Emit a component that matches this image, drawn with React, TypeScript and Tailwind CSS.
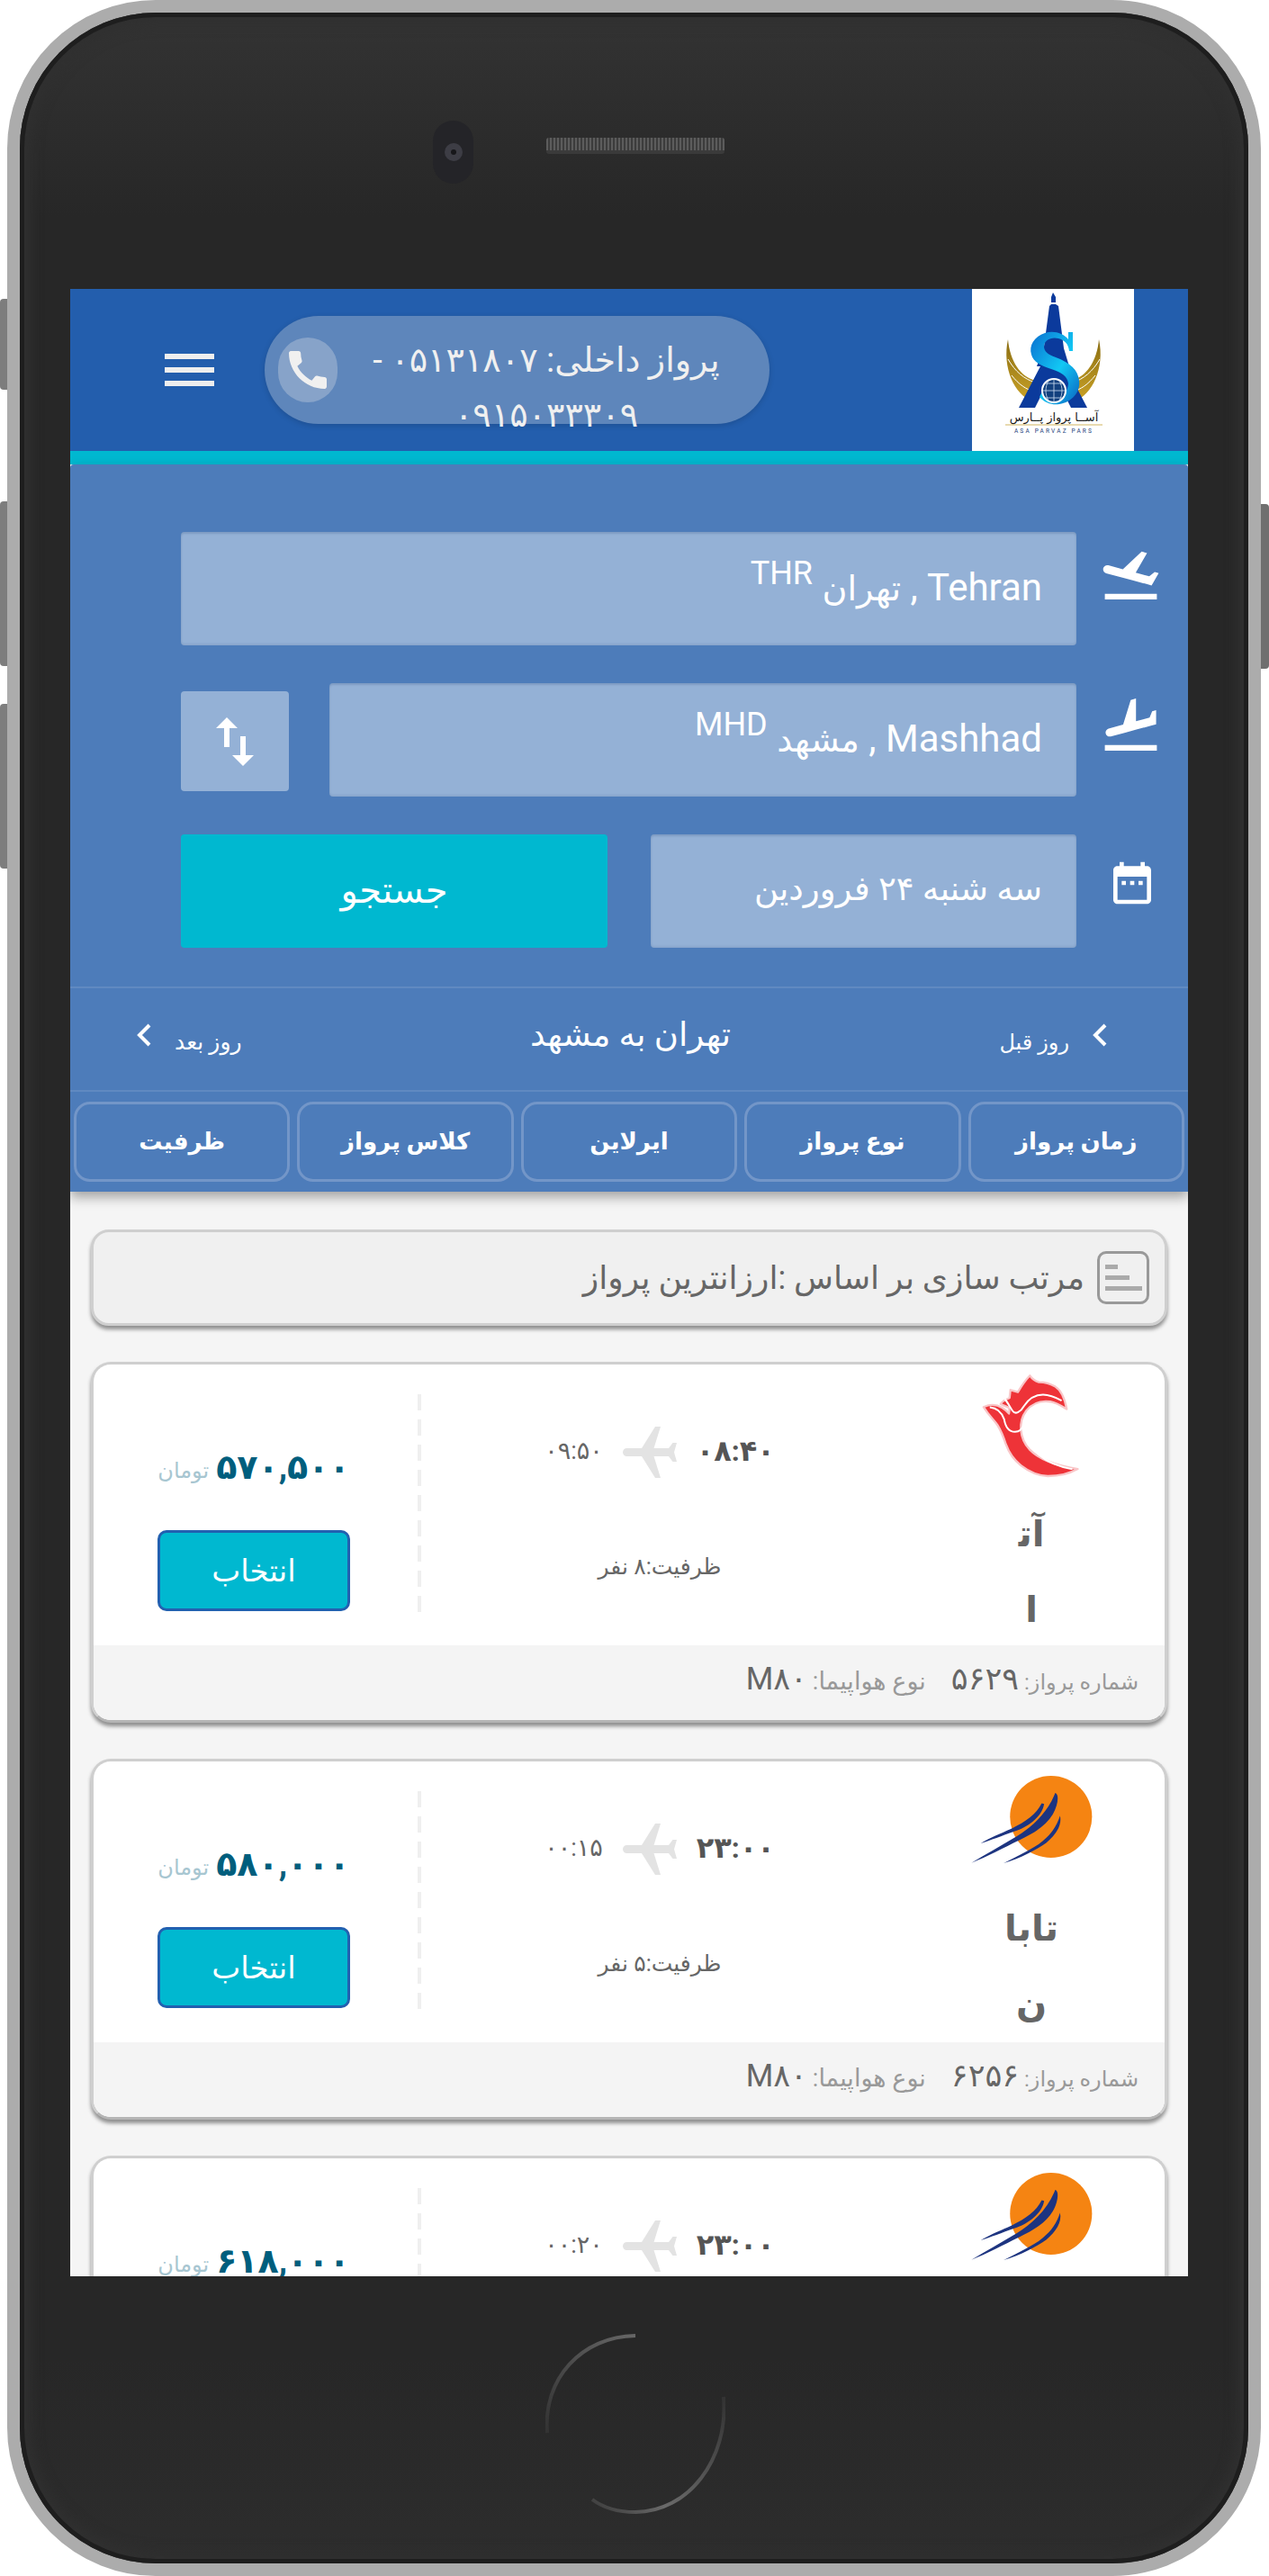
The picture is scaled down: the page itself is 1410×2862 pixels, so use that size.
import type { ReactNode } from 'react'

const font = "[font-family:Roboto,'DejaVu_Sans',sans-serif]"

interface Flight {
  logo: 'ata' | 'taban'
  name: string[]
  dep: string
  arr: string
  seats: string
  price: string
  no: string
  plane: string
}

const flights: Flight[] = [
  { logo: 'ata', name: ['آت\u200d', 'ا'], dep: '۰۸:۴۰', arr: '۰۹:۵۰', seats: 'ظرفیت:۸ نفر', price: '۵۷۰,۵۰۰', no: '۵۶۲۹', plane: 'M۸۰' },
  { logo: 'taban', name: ['تابا', 'ن'], dep: '۲۳:۰۰', arr: '۰۰:۱۵', seats: 'ظرفیت:۵ نفر', price: '۵۸۰,۰۰۰', no: '۶۲۵۶', plane: 'M۸۰' },
  { logo: 'taban', name: ['تابا', 'ن'], dep: '۲۳:۰۰', arr: '۰۰:۲۰', seats: 'ظرفیت:۵ نفر', price: '۶۱۸,۰۰۰', no: '۶۲۵۸', plane: 'M۸۰' },
]

const tabs = ['ظرفیت', 'کلاس پرواز', 'ایرلاین', 'نوع پرواز', 'زمان پرواز']

function Icon({ d, className }: { d: string; className: string }) {
  return (
    <svg viewBox="0 0 24 24" fill="currentColor" className={className}>
      <path d={d} />
    </svg>
  )
}

const takeoff = 'M2.5 19h19v2h-19zm19.57-9.36c-.21-.8-1.04-1.28-1.84-1.06L14.92 10l-6.9-6.43-1.93.51 4.14 7.17-4.97 1.33-1.97-1.54-1.45.39 1.82 3.16.77 1.33 1.6-.43 5.31-1.42 4.35-1.16L21 11.49c.81-.23 1.28-1.05 1.07-1.85z'
const land = 'M2.5 19h19v2h-19zm7.18-5.73l4.35 1.16 5.31 1.42c.8.21 1.62-.26 1.84-1.06.21-.8-.26-1.62-1.06-1.84l-5.31-1.42-2.76-9.02L10.12 2v8.28L5.15 8.95l-.93-2.32-1.45-.39v5.17l1.6.43 5.31 1.43z'
const calendar = 'M9 11H7v2h2v-2zm4 0h-2v2h2v-2zm4 0h-2v2h2v-2zm2-7h-1V2h-2v2H8V2H6v2H5c-1.11 0-1.99.9-1.99 2L3 20c0 1.1.89 2 2 2h14c1.1 0 2-.9 2-2V6c0-1.1-.9-2-2-2zm0 16H5V9h14v11z'
const swap = 'M16 17.01V10h-2v7.01h-3L15 21l4-3.99h-3zM9 3L5 6.99h3V14h2V6.99h3L9 3z'
const call = 'M20.01 15.38c-1.23 0-2.42-.2-3.53-.56-.35-.12-.74-.03-1.01.24l-1.57 1.97c-2.83-1.35-5.48-3.9-6.89-6.83l1.95-1.66c.27-.28.35-.67.24-1.02-.37-1.11-.56-2.3-.56-3.53 0-.54-.45-.99-.99-.99H4.19C3.65 3 3 3.24 3 3.99 3 13.28 10.73 21 20.01 21c.71 0 .99-.63.99-1.18v-3.45c0-.54-.45-.99-.99-.99z'
const flight = 'M21 16v-2l-8-5V3.5c0-.83-.67-1.5-1.5-1.5S10 2.67 10 3.5V9l-8 5v2l8-2.5V19l-2 1.5V22l3.5-1 3.5 1v-1.5L13 19v-5.5l8 2.5z'

function AsaLogo() {
  return (
    <svg viewBox="0 0 180 180" className="w-[180px] h-[180px]">
      <defs>
        <linearGradient id="gold" x1="0" y1="0" x2="0" y2="1">
          <stop offset="0" stopColor="#8a6d12" />
          <stop offset="1" stopColor="#c9a227" />
        </linearGradient>
        <linearGradient id="sblue" x1="0" y1="0" x2="1" y2="1">
          <stop offset="0" stopColor="#0a6fd0" />
          <stop offset="0.55" stopColor="#12c8f4" />
          <stop offset="1" stopColor="#0a62c0" />
        </linearGradient>
      </defs>
      <path d="M40 56c2 24 14 42 31 46l-5 22C48 118 33 88 40 56z" fill="url(#gold)" />
      <path d="M141 56c-2 24-14 42-31 46l5 22c18-6 33-36 26-68z" fill="url(#gold)" />
      <path d="M40 78c8 14 18 22 30 26M44 96c8 10 16 16 26 18M112 104c12-4 22-12 30-26M111 114c10-2 18-8 26-18" stroke="#fff" strokeWidth="1" fill="none" />
      <path d="M90 4l3 5v8l3 2 6 47 6 20h-4l24 46h-18l-8-16H78l-8 16H52l24-46h-4l8-22 6-45 2-2V9z" fill="#0b3a9c" />
      <rect x="84" y="15" width="12" height="2" fill="#fff" />
      <path d="M112 48h-5v8c-6-7-16-10-26-7-12 4-18 14-15 24 2 8 10 12 22 16 12 4 18 8 19 16 0 9-8 16-17 15-5-1-9-3-12-6l-3 6c6 7 14 9 22 8 14-2 24-14 22-26-1-12-10-20-26-26-9-3-13-7-13-12 0-7 8-11 16-9 7 2 11 6 12 14h4z" fill="url(#sblue)" />
      <circle cx="91" cy="113" r="13" fill="#12407e" stroke="#fff" strokeWidth="2" />
      <path d="M78 113h26M91 100v26M82 105h18M82 121h18M85 102c-4 7-4 15 0 22M97 102c4 7 4 15 0 22" stroke="#cfe0f2" strokeWidth="0.8" fill="none" />
      <text x="91" y="147" textAnchor="middle" fontSize="13" fill="#1a1a1a" fontFamily="DejaVu Sans" direction="rtl">آســا پرواز پــارس</text>
      <rect x="37" y="150.5" width="108" height="1" fill="#d1b560" />
      <text x="91" y="160" textAnchor="middle" fontSize="6.5" letterSpacing="2.2" fill="#24427c" fontFamily="Roboto">ASA PARVAZ PARS</text>
    </svg>
  )
}

function AtaLogo() {
  return (
    <svg viewBox="150 25 330 370" className="w-[110px] h-[123px]">
      <path
        d="M470 362c-25 14-60 24-100 24-30-2-62-14-90-36-26-20-42-48-50-70-10-30-15-44-28-64-10-16-28-30-47-61 22-10 42-10 62 2 10 6 18 14 23 20 2-8 2-14 0-20-10-4-20-8-28-12 8-12 18-16 30-20l3-27 25 7c6-10 20-34 40-55 8 12 18 18 30 22 22 0 40 6 55 15 22 14 32 42 38 75-14-8-30-20-55-25-30-4-60 6-80 30-15 20-20 42-18 65 2 24 12 46 28 64 32 34 84 54 162 66z"
        fill="#ee3338"
        stroke="#f9c6c8"
        strokeWidth="7"
        strokeLinejoin="round"
      />
      <path
        d="M176 156c24 2 40 18 48 40 4 24 16 42 36 42 16 0 26-12 30-28M226 128c10 12 18 28 26 40 10 14 28 2 38-16 16-24 36-38 64-38 22 0 44 10 62 20M292 235c8 58 66 112 160 128"
        fill="none"
        stroke="#fff"
        strokeWidth="6"
      />
    </svg>
  )
}

function TabanLogo() {
  return (
    <svg viewBox="85 40 415 305" className="w-[138px] h-[102px]">
      <circle cx="358" cy="185" r="137" fill="#f58412" />
      <path d="M335 142c-6 40-50 76-100 92-40 14-80 30-112 40 36-22 70-34 104-50 46-22 82-48 100-84z" fill="#1d3480" />
      <path d="M372 105c14 4 10 40-8 72-24 40-66 64-112 86-50 24-110 56-160 76 46-28 96-56 150-88 50-30 100-76 126-136z" fill="#1d3480" />
      <path d="M388 182c8 30-14 64-46 90-34 24-84 50-142 68 48-26 96-46 130-74 30-24 48-52 58-84z" fill="#1d3480" />
    </svg>
  )
}

function Field({ children, className }: { children: ReactNode; className: string }) {
  return (
    <div
      dir="rtl"
      className={`h-[126px] bg-[#94b1d6] rounded-[4px] shadow-[inset_0_2px_2px_rgba(60,90,140,0.25),inset_0_-2px_2px_rgba(60,90,140,0.12)] flex items-center pr-[38px] pb-[4px] text-white ${className}`}
    >
      <span>{children}</span>
    </div>
  )
}

function FlightCard({ f }: { f: Flight }) {
  return (
    <div className="mx-[23px] mb-[40px] h-[401px] rounded-[22px] border-[3px] border-[#cfcfcf] border-b-[#b5b5b5] bg-white shadow-[0_4px_4px_rgba(0,0,0,0.42)] overflow-hidden flex flex-col">
      <div className="h-[312px] flex">
        <div className="w-[356px] mr-[4px] flex flex-col items-center pt-[84px]">
          <div className="h-[60px] flex items-center gap-[8px]">
            <span className="text-[24px] text-[#a7c6d1] mt-[8px]">تومان</span>
            <span className="text-[38px] font-bold text-[#005e7d] leading-none">{f.price}</span>
          </div>
          <button className="mt-[40px] w-[214px] h-[90px] rounded-[10px] bg-[#00b8d0] border-[3px] border-[#2260b0] text-white text-[34px]">انتخاب</button>
        </div>
        <div className="w-[4px] h-[246px] mt-[33px] bg-[repeating-linear-gradient(180deg,#efefef_0,#efefef_18px,transparent_18px,transparent_28px)]" />
        <div className="w-[530px] flex flex-col items-center pt-[66px]">
          <div className="h-[60px] flex items-center gap-[16px]">
            <span className="text-[27px] text-[#666]">{f.arr}</span>
            <Icon d={flight} className="w-[72px] h-[72px] -rotate-90 text-[#e3e3e3]" />
            <span className="text-[32px] font-bold text-[#555]">{f.dep}</span>
          </div>
          <div dir="rtl" className="mt-[77px] h-[44px] flex items-center text-[25px] text-[#666]">{f.seats}</div>
        </div>
        <div className="flex-1 flex flex-col items-center pt-[4px] text-[#666]">
          <div className="h-[124px] flex items-center">{f.logo === 'ata' ? <AtaLogo /> : <TabanLogo />}</div>
          <div dir="rtl" className="mt-[20px] text-center text-[40px] font-bold leading-[84px]">
            {f.name.map(line => <div key={line}>{line}</div>)}
          </div>
        </div>
      </div>
      <div dir="rtl" className="flex-1 bg-[#f4f4f4] flex items-start pt-[12px] pr-[29px] text-[24px] text-[#999]">
        <span>شماره پرواز: <span className="text-[35px] text-[#666]">{f.no}</span></span>
        <span className="mr-[28px]"><span className="text-[27px]">نوع هواپیما:</span> <span className="text-[35px] text-[#666]">{f.plane}</span></span>
      </div>
    </div>
  )
}

export default function App() {
  return (
    <div className={`relative w-[1410px] h-[2862px] bg-white overflow-hidden ${font}`}>
      <div className="absolute left-0 top-[332px] w-[9px] h-[101px] rounded-l-[4px] bg-[#7d7d7d]" />
      <div className="absolute left-0 top-[557px] w-[9px] h-[183px] rounded-l-[4px] bg-[#7d7d7d]" />
      <div className="absolute left-0 top-[782px] w-[9px] h-[183px] rounded-l-[4px] bg-[#7d7d7d]" />
      <div className="absolute right-0 top-[560px] w-[10px] h-[183px] rounded-r-[4px] bg-[#6f6f6f]" />

      <div className="relative ml-[8px] w-[1393px] h-[2862px] rounded-[165px] border-[14px] border-[#acacac] shadow-[inset_0_0_0_2px_#777] bg-[linear-gradient(180deg,#333_0,#272727_8%,#272727_92%,#2d2d2d_100%)]">
        <div className="absolute inset-0 rounded-[151px] shadow-[inset_0_0_0_5px_#1e1e1e,inset_0_0_14px_12px_#303030]" />

        {/* camera and speaker */}
        <div className="absolute left-[459px] top-[120px] w-[45px] h-[70px] rounded-full bg-[#242428] flex items-center justify-center">
          <div className="w-[20px] h-[20px] rounded-full bg-[#3d3d45] flex items-center justify-center">
            <div className="w-[6px] h-[6px] rounded-full bg-[#17171a]" />
          </div>
        </div>
        <div className="absolute left-[585px] top-[139px] w-[198px] h-[18px] rounded-[3px] bg-[repeating-linear-gradient(90deg,#5c5c5c_0,#5c5c5c_2px,#3c3c3c_2px,#3c3c3c_4px)] border-b-[4px] border-[#3a3a3a]" />

        {/* home button */}
        <svg viewBox="0 0 200 200" fill="none" className="absolute left-[584px] top-[2579px] w-[200px] h-[200px]">
          <defs>
            <linearGradient id="ringTop" x1="1" y1="0" x2="0" y2="1">
              <stop offset="0" stopColor="#666" />
              <stop offset="1" stopColor="#333" />
            </linearGradient>
            <linearGradient id="ringBottom" x1="1" y1="0" x2="0" y2="1">
              <stop offset="0" stopColor="#333" />
              <stop offset="0.7" stopColor="#6a6a6a" />
              <stop offset="1" stopColor="#3a3a3a" />
            </linearGradient>
          </defs>
          <path d="M2 110C-3 50 40 3 100 2" stroke="url(#ringTop)" strokeWidth="4" />
          <path d="M198 70c6 70-40 128-98 128-25 0-40-8-48-14" stroke="url(#ringBottom)" strokeWidth="4" />
        </svg>

        {/* screen */}
        <div className="absolute left-[56px] top-[307px] w-[1242px] h-[2208px] overflow-hidden bg-[#f5f5f5]">
          <header className="h-[180px] bg-[#235ead] flex items-center">
            <div className="ml-[105px] w-[55px] flex flex-col gap-[9px]">
              <div className="h-[6px] bg-[#eee]" />
              <div className="h-[6px] bg-[#eee]" />
              <div className="h-[6px] bg-[#eee]" />
            </div>
            <div className="ml-[56px] w-[561px] h-[120px] rounded-[60px] bg-[#5e86bb] flex items-start pl-[15px] pt-[24px] shadow-[0_2px_6px_rgba(0,0,0,0.15)]">
              <div className="w-[66px] h-[72px] rounded-full bg-[#87a3c9] flex items-center justify-center text-[#f0f0f0] shrink-0">
                <Icon d={call} className="w-[56px] h-[56px]" />
              </div>
              <div dir="rtl" className="ml-[30px] w-[404px] -mt-[24px] text-center text-[#f0f0f0] text-[38px] leading-[61px] pt-[19px]">
                پرواز داخلی: ۰۵۱۳۱۸۰۷ - ۰۹۱۵۰۳۳۳۰۹
              </div>
            </div>
            <div className="ml-auto mr-[60px] w-[180px] h-[180px] bg-white">
              <AsaLogo />
            </div>
          </header>
          <div className="h-[15px] bg-[#00b8d0]" />

          <section className="h-[808px] bg-[#4d7cba] rounded-t-[4px] shadow-[0_6px_14px_rgba(0,0,0,0.35)] relative">
            <div className="h-[580px] pt-[75px] pl-[123px] pr-[24px] flex flex-col gap-[42px]">
              <div className="flex">
                <Field className="w-[995px] text-[42px]">Tehran , <span className="text-[38px]">تهران</span> <sup className="text-[36px]">THR</sup></Field>
                <Icon d={takeoff} className="w-[73px] h-[73px] ml-[24px] mt-[11px] -scale-x-100 text-white" />
              </div>
              <div className="flex">
                <div className="w-[120px] h-[111px] mt-[9px] bg-[#94b1d6] rounded-[4px] flex items-center justify-center text-white">
                  <Icon d={swap} className="w-[72px] h-[72px]" />
                </div>
                <Field className="ml-[45px] w-[830px] text-[42px]">Mashhad , <span className="text-[38px]">مشهد</span> <sup className="text-[36px]">MHD</sup></Field>
                <Icon d={land} className="w-[73px] h-[73px] ml-[24px] mt-[11px] -scale-x-100 text-white" />
              </div>
              <div className="flex">
                <button className="w-[474px] h-[126px] bg-[#00b8d0] rounded-[4px] text-white text-[40px]">جستجو</button>
                <Field className="ml-[48px] w-[473px] text-[37px]">سه شنبه ۲۴ فروردین</Field>
                <Icon d={calendar} className="w-[56px] h-[56px] ml-[34px] mt-[26px] text-white" />
              </div>
            </div>
            <div dir="rtl" className="h-[117px] border-y-[2px] border-[#6089c1] flex items-center justify-between text-white relative">
              <div className="flex items-center pr-[88px] gap-[24px]">
                <svg viewBox="0 0 20 26" fill="none" stroke="currentColor" strokeWidth="4" className="w-[20px] h-[26px] -mt-[10px] -scale-x-100 order-first">
                  <path d="M4 2l11 11L4 24" />
                </svg>
                <span className="text-[24px] mt-[6px]">روز قبل</span>
              </div>
              <span className="text-[37px] -mt-[10px] ml-[22px]">تهران به مشهد</span>
              <div className="flex items-center pl-[72px] gap-[24px]">
                <span className="text-[25px] mt-[6px]">روز بعد</span>
                <svg viewBox="0 0 20 26" fill="none" stroke="currentColor" strokeWidth="4" className="w-[20px] h-[26px] -mt-[10px]">
                  <path d="M4 2l11 11L4 24" transform="rotate(180 10 13)" />
                </svg>
              </div>
            </div>
            <div className="pt-[11px] px-[4px] flex gap-[8px]">
              {tabs.map(t => (
                <div key={t} className="flex-1 h-[89px] rounded-[18px] border-[3px] border-[#7396c8] flex items-center justify-center text-white text-[26px] font-bold">{t}</div>
              ))}
            </div>
          </section>

          <div className="mt-[42px] mx-[23px] h-[107px] rounded-[20px] border-[3px] border-[#cfcfcf] bg-[#f0f0f0] shadow-[0_4px_4px_rgba(0,0,0,0.42)] flex items-center justify-end pr-[17px]">
            <span dir="rtl" className="text-[36px] text-[#666]">مرتب سازی بر اساس :ارزانترین پرواز</span>
            <div className="ml-[14px] w-[58px] h-[59px] rounded-[10px] border-[3px] border-[#999] flex flex-col justify-center gap-[7px] pl-[6px]">
              <div className="w-[14px] h-[5px] bg-[#aaa]" />
              <div className="w-[27px] h-[5px] bg-[#aaa]" />
              <div className="w-[41px] h-[5px] bg-[#aaa]" />
            </div>
          </div>

          <div className="mt-[40px]">
            {flights.map(f => <FlightCard key={f.price} f={f} />)}
          </div>
        </div>
      </div>
    </div>
  )
}
